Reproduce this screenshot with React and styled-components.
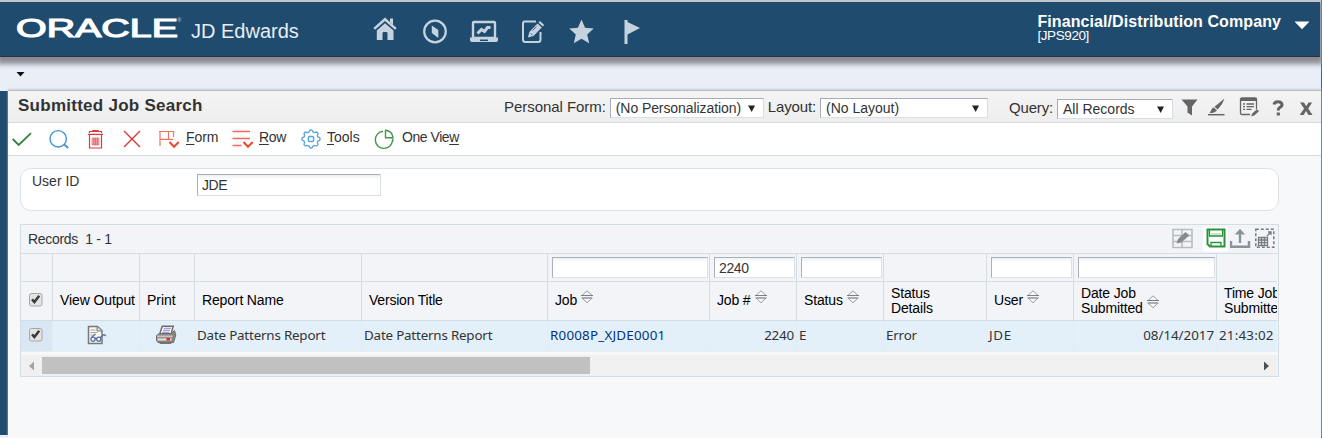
import React from 'react';
import styled, { createGlobalStyle } from 'styled-components';

const Global = createGlobalStyle`
  * { box-sizing: border-box; }
  html, body { margin: 0; padding: 0; overflow: hidden; }
  body { font-family: "Liberation Sans", Arial, sans-serif; font-size: 14px; color: #333; }
`;

const Page = styled.div`
  width: 1322px;
  height: 438px;
  display: flex;
  flex-direction: column;
  background: #e9eef7;
  border-right: 1px solid #1c6fb5;
`;
const TopBar = styled.header`
  flex: none;
  height: 57px;
  display: flex;
  align-items: flex-start;
  background: #1f4b6e;
  border-top: 2px solid #c3c5c7;
  border-bottom: 1px solid #33303a;
  box-shadow: 0 4px 5px 3px #8b8b93;
  margin-right: 1px;
  z-index: 1;
`;
const Logo = styled.svg`
  flex: none;
  display: block;
  width: 170px;
  height: 40px;
  margin-left: 16px;
  font-family: "Liberation Sans", Arial, sans-serif;
`;
const Product = styled.div`
  width: 181px;
  margin: 16px 0 0 5px;
  font-size: 20px;
  line-height: 26px;
  color: #e9eef2;
  white-space: nowrap;
`;
const NavIcons = styled.nav`
  display: flex;
  gap: 21px;
  margin-top: 15px;
`;
const NavIcon = styled.svg`
  width: 28px;
  height: 28px;
  display: block;
  color: #c6d3de;
`;
const Company = styled.div`
  margin: 11px 0 0 auto;
  color: #fff;
  white-space: nowrap;
`;
const CompanyName = styled.div`
  font-size: 16px;
  line-height: 17px;
  font-weight: bold;
  letter-spacing: 0.09px;
`;
const Env = styled.div`
  font-size: 13.5px;
  line-height: 12px;
  letter-spacing: -0.4px;
`;
const CompanyCaret = styled.svg`
  width: 16px;
  height: 9px;
  margin: 19px 10px 0 13px;
`;
const Crumbs = styled.div`
  flex: none;
  height: 33px;
  padding: 14px 0 0 16px;
  svg { display: block; }
`;
const Body = styled.div`
  flex: 1;
  display: flex;
  min-height: 0;
`;
const Strip = styled.aside`
  width: 8px;
  height: 344px;
  margin-top: 1px;
  background: #1f4b6e;
`;
const Main = styled.main`
  flex: 1;
  min-width: 0;
  background: #f7f8fa;
  border-top: 1px solid #bdc1c7;
  box-shadow: 0 -1px 2px #c9cdd5;
`;
const TitleBar = styled.div`
  height: 32px;
  display: flex;
  align-items: flex-start;
  background: linear-gradient(#f4f4f4, #eeeeee);
  border-bottom: 1px solid #d6dae0;
`;
const Title = styled.h1`
  margin: 5px auto 0 10px;
  font-size: 17px;
  line-height: 19px;
  letter-spacing: 0.26px;
  color: #333;
`;
const Label = styled.label`
  font-size: 15px;
  line-height: 18px;
  margin-top: ${p => p.$top || 7}px;
  margin-right: ${p => p.$gap}px;
  letter-spacing: ${p => p.$ls || 0}px;
  white-space: nowrap;
`;
const Select = styled.div`
  flex: none;
  width: ${p => p.$w}px;
  height: 20px;
  margin: ${p => p.$top}px ${p => p.$right}px 0 0;
  padding: 0 8px 0 5px;
  display: flex;
  align-items: center;
  justify-content: space-between;
  background: #fff;
  border: 1px solid #d9dfe6;
  border-top-color: #a6adb9;
  border-left-color: #a6adb9;
  font-size: 14px;
  letter-spacing: ${p => p.$ls || 0}px;
  white-space: nowrap;
  svg { flex: none; width: 7px; height: 7px; }
`;
const TitleIcons = styled.div`
  display: flex;
  align-items: flex-start;
  margin-top: 5px;
  svg { display: block; color: #636567; }
`;
const ToolBar = styled.div`
  height: 33px;
  display: flex;
  background: #fff;
  border-bottom: 1px solid #d9dde3;
`;
const Tool = styled.div`
  flex: none;
  width: ${p => p.$w}px;
  display: flex;
  svg { flex: none; display: block; width: 24px; height: 24px; margin-top: 4px; }
  span { margin: 6px 0 0 ${p => p.$gap || 5}px; font-size: 14px; line-height: 17px; letter-spacing: ${p => p.$ls || 0}px; white-space: nowrap; }
  u { text-underline-offset: 2px; text-decoration-skip-ink: none; }
`;
const Content = styled.section`
  padding: 12px 0 0 12px;
  width: 1271px;
`;
const FormBox = styled.div`
  height: 43px;
  display: flex;
  padding: 5px 0 0 11px;
  background: #fff;
  border: 1px solid #dce1e6;
  border-radius: 11px;
`;
const FieldLabel = styled.label`
  width: 165px;
  font-size: 14px;
  line-height: 14px;
`;
const Field = styled.div`
  flex: none;
  width: ${p => p.$w}px;
  height: ${p => p.$h || 22}px;
  padding: 0 4px;
  line-height: 20px;
  background: linear-gradient(#edf0f2, #fff 4px);
  border: 1px solid #dbe0e7;
  border-top-color: #aab0bb;
  border-left-color: #aab0bb;
  font-size: 14px;
  letter-spacing: -0.4px;
  white-space: nowrap;
`;
const Grid = styled.div`
  height: 153px;
  margin-top: 13px;
  border: 1px solid #d4dce4;
  background: #f2f4f8;
  overflow: hidden;
`;
const GridHead = styled.div`
  height: 29px;
  display: flex;
  justify-content: space-between;
  padding: 0 3px 0 7px;
  border-bottom: 1px solid #d4dce4;
  font-size: 14px;
  line-height: 28px;
  letter-spacing: -0.3px;
  white-space: pre;
`;
const GridTools = styled.div`
  display: flex;
  svg { display: block; }
`;
const Row = styled.div`
  display: flex;
  width: 1256px;
  height: ${p => p.$h}px;
  border-bottom: 1px solid ${p => (p.$selected ? '#e9ecf0' : '#d4dce4')};
  background: ${p => (p.$selected ? '#e3f0fa' : 'transparent')};
  overflow: hidden;
`;
const Cell = styled.div`
  flex: none;
  width: ${p => p.$w}px;
  height: 100%;
  border-right: 1px solid ${p => (p.$soft ? '#e3ebf3' : '#d4dce4')};
  background: ${p => (p.$shade ? '#d9e7f4' : 'none')};
  padding-left: ${p => p.$pl || 0}px;
  padding-right: ${p => p.$pr || 0}px;
  padding-top: ${p => p.$pt || 0}px;
  padding-bottom: ${p => p.$pb || 0}px;
  display: flex;
  align-items: ${p => (p.$top ? 'flex-start' : 'center')};
  justify-content: ${p => p.$justify || 'flex-start'};
  overflow: hidden;
  white-space: nowrap;
  svg { flex: none; }
`;
const HeadText = styled.div`
  font-size: 14px;
  line-height: 15px;
  letter-spacing: ${p => p.$ls ?? -0.15}px;
  color: #000;
  white-space: pre;
`;
const Data = styled.div`
  font-family: "Noto Sans", "Open Sans", sans-serif;
  font-size: 13.4px;
  line-height: 20px;
  letter-spacing: ${p => p.$ls ?? -0.2}px;
  color: ${p => (p.$link ? '#003286' : '#333')};
`;
const Scroll = styled.div`
  display: flex;
  width: 1256px;
  height: 21px;
  margin-top: 3px;
  align-items: flex-start;
  background: #f0f0f0;
  box-shadow: 0 -3px 0 #f7f8fa;
  svg { flex: none; width: 21px; height: 21px; }
`;
const Thumb = styled.div`
  width: 548px;
  height: 17px;
  margin: 2px auto 0 0;
  background: #c1c1c1;
`;

const Down = () => <svg viewBox="0 0 8 8"><path d="M0 .5h8L4.2 8z" fill="#222" /></svg>;

const Check = () => (
  <svg width="15" height="15" viewBox="0 0 15 15">
    <rect x="1.5" y="1.5" width="12.5" height="12.5" rx="2" fill="#e4e4e4" stroke="#a6a6a6" />
    <path d="M4 7.3 6.4 10l4.8-6.3" fill="none" stroke="#3a3a3a" strokeWidth="2.5" />
  </svg>
);

const Sort = () => (
  <svg width="12" height="14" viewBox="0 0 12 14">
    <path d="M1 5.5 6 .8l5 4.7z" fill="#f8f8fa" stroke="#979ba3" />
    <path d="M0 5.5h12" stroke="#777c85" />
    <path d="M1 8l5 4.8L11 8z" fill="#f8f8fa" stroke="#979ba3" />
    <path d="M.5 8h11" stroke="#8d929a" />
  </svg>
);
const SortSlot = styled.span`
  display: block;
  height: 14px;
  margin: ${p => p.$mt}px 0 0 4px;
  svg { display: block; }
`;

const columns = [
  { w: 32 },
  { w: 87, head: 'View Output', ls: -0.1 },
  { w: 55, head: 'Print', ls: -0.05 },
  { w: 167, head: 'Report Name', val: 'Date Patterns Report' },
  { w: 186, head: 'Version Title', val: 'Date Patterns Report', ls: -0.2 },
  { w: 162, head: 'Job', sort: true, filter: 156, val: 'R0008P_XJDE0001', link: true, vls: 0.2 },
  { w: 87, head: 'Job #', sort: true, filter: 81, filterVal: '2240', val: '2240', right: true },
  { w: 87, head: 'Status', sort: true, filter: 81, val: 'E' },
  { w: 103, head: 'Status\nDetails', val: 'Error' },
  { w: 87, head: 'User', sort: true, filter: 81, val: 'JDE', vls: 0.6 },
  { w: 143, head: 'Date Job\nSubmitted', sort: true, filter: 137, val: '08/14/2017', right: true, vls: -0.05 },
  { w: 80, head: 'Time Job\nSubmitted', val: '21:43:02', vls: 0.2 },
];

const Doc = () => (
  <svg width="20" height="20" viewBox="0 0 20 20" fill="none">
    <path d="M1.5 1.5h9l4.5 4v13H1.5z" fill="#f7f5ee" stroke="#77787a" strokeWidth="1.5" />
    <path d="M10 1.5v4.5h5" stroke="#77787a" fill="#d8d8d8" />
    <path d="M3.5 5h5M3.5 7.5h7M3.5 10h3" stroke="#a9a9a4" />
    <path d="M4.5 12.5l4-3.5M12.5 13l4.5-3.5 2 1.5" stroke="#5470a8" strokeWidth="1.3" />
    <circle cx="6" cy="14.3" r="2.1" stroke="#5470a8" strokeWidth="1.3" fill="#eef3ff" />
    <circle cx="11.8" cy="14.3" r="2.1" stroke="#5470a8" strokeWidth="1.3" fill="#eef3ff" />
    <path d="M8 13.5h1.6" stroke="#5470a8" strokeWidth="1.3" />
  </svg>
);
const Printer = () => (
  <svg width="22" height="20" viewBox="0 0 22 20">
    <path d="M7.2 1.2h11L16 9.5H4.5z" fill="#fbfaf4" stroke="#706c6c" strokeWidth="1.5" />
    <path d="M8.8 3.4h7M8 5.4h7M7.2 7.4h7" stroke="#a29be0" strokeWidth="1.2" />
    <path d="M1.5 10.5 4.5 8.5h12l3-3 1.3 4.5-2.3 7.5H3l-1.5-2z" fill="#8b8686" stroke="#706c6c" />
    <path d="M2 10.5h15.5v1.8H2z" fill="#c9c5c1" />
    <path d="M2.5 13.5h14v2h-14z" fill="#e8e4df" />
    <path d="M11.5 12.8h3.5v2.7h-3.5z" fill="#e02a28" />
    <path d="M4 17.5h13l-1 1.5H5z" fill="#797474" />
  </svg>
);

const gear = Array.from({ length: 64 }, (_, i) => {
  const a = (i / 64) * Math.PI * 2;
  const r = 8.1 + Math.max(-0.9, Math.min(0.9, Math.cos(a * 8) * 1.8));
  return `${(12 + r * Math.cos(a)).toFixed(2)},${(12 + r * Math.sin(a)).toFixed(2)}`;
}).join(' ');

export default function App() {
  return (
    <Page>
      <Global />
      <TopBar>
        <Logo viewBox="0 0 170 40">
          <text x="0" y="35.3" fontSize="26.5" fill="#fff" stroke="#fff" strokeWidth="1.2" textLength="162" lengthAdjust="spacingAndGlyphs">ORACLE</text>
          <text x="161.5" y="20" fontSize="5" fill="#d4dee6">®</text>
        </Logo>
        <Product>JD Edwards</Product>
        <NavIcons>
          <NavIcon viewBox="0 0 28 28" fill="currentColor">
            <path d="M18 1.5h3v6.5l-3-3z" />
            <path d="M13 .5 1.3 11l1.7 1.8L13 4l10 8.8 1.7-1.8z" />
            <path d="M13 6.3 4.8 13.5V23h5.7v-6.5c0-1 .5-1.5 1.5-1.5h2c1 0 1.5.5 1.5 1.5V23h6v-9.5z" />
          </NavIcon>
          <NavIcon viewBox="0 0 28 28" fill="none" stroke="currentColor" strokeWidth="2.2">
            <circle cx="14" cy="14.5" r="10.8" />
            <path d="M10.8 8.5l6.5 4.5v8l-6.5-5z" fill="currentColor" stroke="none" />
          </NavIcon>
          <NavIcon viewBox="0 0 28 28" fill="none" stroke="currentColor" strokeWidth="2">
            <rect x="3" y="5" width="22" height="16" rx="1" strokeWidth="2.4" />
            <path d="M7.5 16.5l4-4 3 2 3-4h3" strokeWidth="3" />
            <path d="M0 20.5h28V23q0 2-2 2H2q-2 0-2-2z" fill="currentColor" stroke="none" />
            <path d="M10 23.3h8" stroke="#1f4b6e" strokeWidth="1.5" />
          </NavIcon>
          <NavIcon viewBox="0 0 28 28" fill="none" stroke="currentColor" strokeWidth="2">
            <path d="M17 4.5H6q-2 0-2 2v16q0 2.5 2.5 2.5H19q2.5 0 2.5-2.5V15" />
            <path d="M9 20.5l1.3-5.5L18.5 6.5l4.3 4L14.5 19z" fill="currentColor" stroke="none" />
            <path d="M19.5 5.4l1.5-1.5 4.2 4-1.5 1.6z" fill="currentColor" stroke="none" />
            <path d="M11.5 16.5l2 1.5M13.5 13.5l4-4" stroke="#1f4b6e" strokeWidth=".8" />
          </NavIcon>
          <NavIcon viewBox="0 0 28 28" fill="currentColor">
            <path d="M13.5 2.5l3.6 8.3 8.6.8-6.5 6 2 8.7-7.7-4.5-7.7 4.5 2-8.7-6.5-6 8.6-.8z" />
          </NavIcon>
          <NavIcon viewBox="0 0 28 28" fill="currentColor">
            <path d="M7.500 3h3v24h-3zM10.500 5l12.500 6-12.500 6.500z" />
          </NavIcon>
        </NavIcons>
        <Company>
          <CompanyName>Financial/Distribution Company</CompanyName>
          <Env>[JPS920]</Env>
        </Company>
        <CompanyCaret viewBox="0 0 16 9"><path d="M.5.5h15L8 8.3z" fill="#fff" /></CompanyCaret>
      </TopBar>
      <Crumbs>
        <svg width="9" height="6" viewBox="0 0 9 6"><path d="M.5 1h8l-4 4.5z" fill="#111" /></svg>
      </Crumbs>
      <Body>
        <Strip />
        <Main>
          <TitleBar>
            <Title>Submitted Job Search</Title>
            <Label $gap={4} $ls={-0.06}>Personal Form:</Label>
            <Select $w={154} $top={7} $right={4} $ls={-0.08}>(No Personalization)<Down /></Select>
            <Label $gap={4} $ls={-0.14}>Layout:</Label>
            <Select $w={168} $top={7} $right={21}>(No Layout)<Down /></Select>
            <Label $gap={4} $top={8} $ls={-0.17}>Query:</Label>
            <Select $w={116} $top={8} $right={8}>All Records<Down /></Select>
            <TitleIcons>
              <svg width="27" height="24" viewBox="0 0 27 24"><path d="M.5 3.5h16L11 10.5v9l-4.5-3v-6z" fill="currentColor" /></svg>
              <svg width="31" height="24" viewBox="0 0 31 24">
                <path d="M16.5 2.5 14 8 9.7 13.5l-3.2-2.8z" fill="currentColor" />
                <path d="M5.8 11.5q-2.3.8-2.6 2.8-.5 1.5-1.7 2.4 4.8 1 7.5-2.2z" fill="currentColor" />
                <path d="M0 18.7h16.5" stroke="currentColor" strokeWidth="1.5" />
              </svg>
              <svg width="33" height="24" viewBox="0 0 33 24" fill="none" stroke="currentColor">
                <path d="M11 18.5H3q-1.5 0-1.5-1.5V3.5Q1.5 2 3 2h13q1.5 0 1.5 1.5V13" strokeWidth="1.3" />
                <path d="M1.5 3.5h16" strokeWidth="3" />
                <path d="M4 8h2M7.5 8h7.5M4 10.7h2M7.5 10.7h7.5M4 13.4h2M7.5 13.4h5" strokeWidth="1.3" />
                <path d="M12.5 20l1-2.5 4.5-4 1.7 1.7-4.5 4z" fill="currentColor" strokeWidth=".5" />
              </svg>
              <svg width="27" height="24" viewBox="0 0 27 24" fill="none" stroke="currentColor" strokeWidth="3">
                <path d="M2 8.5Q2.5 5.7 6 5.7T10 8.5Q10 10.5 8 11.3 6.3 12 6.3 14.5" />
                <path d="M4.7 16.5h3.2v3H4.7z" fill="currentColor" stroke="none" />
              </svg>
              <svg width="22" height="24" viewBox="0 0 22 24"><path d="M1 6.5h4l2.2 3.7 2.3-3.7h3.7L9.2 12.4l4.3 6.6h-4L7 14.9 4.7 19H.7l4.4-6.6z" fill="currentColor" /></svg>
            </TitleIcons>
          </TitleBar>
          <ToolBar>
            <Tool $w={39}><svg viewBox="-3 0 24 24"><path d="M1.7 12l6 6L20 6.2" fill="none" stroke="#32853c" strokeWidth="1.8" /></svg></Tool>
            <Tool $w={36}><svg viewBox="0 0 24 24" fill="none" stroke="#3e92d3" strokeWidth="1.4"><circle cx="11.2" cy="11.8" r="8.2" /><path d="M17.2 17.5l4 3.5" strokeWidth="1.7" /></svg></Tool>
            <Tool $w={37}>
              <svg viewBox="0 0 24 24" fill="none" stroke="#d93b40" strokeWidth="1.2">
                <path d="M6.5 7.5v13.5h12V7.5M5 7.4h15M6.5 6V4.5h12V6M10 4.5V3.7h5v.8" /><path d="M9 11h7v7H9z" fill="#f0aaab" stroke="#e88285" strokeWidth=".8" /><path d="M10.8 11v7M12.6 11v7M14.4 11v7" strokeWidth=".6" />
              </svg>
            </Tool>
            <Tool $w={37}><svg viewBox="0 0 24 24"><path d="M4 4l16 16M20 4 4 20" stroke="#dc3035" strokeWidth="1.3" /></svg></Tool>
            <Tool $w={74} $ls={-0.1}>
              <svg viewBox="0 0 24 24" fill="none" stroke="#ee7564" strokeWidth="1.2"><path d="M2 4.5h15M3 4v15M11.5 4v8M3 12.3h13M16.5 4v6" /><path d="M12.5 15l4.5 4.7 4.7-4.7" stroke="#ea4934" strokeWidth="2" /></svg>
              <span><u>F</u>orm</span>
            </Tool>
            <Tool $w={68} $gap={4} $ls={-0.3}>
              <svg viewBox="0 0 24 24" fill="none" stroke="#ed6b5c" strokeWidth="1.3"><path d="M1.5 4.5h17.5M1.5 11.5h17.5M1.5 18.5h9" /><path d="M12.5 15l4.5 4.7 4.7-4.7" stroke="#ea4934" strokeWidth="2" /></svg>
              <span><u>R</u>ow</span>
            </Tool>
            <Tool $w={74} $gap={4}>
              <svg viewBox="0 0 24 24" fill="none" stroke="#58a3da" strokeWidth="1.3"><polygon points={gear} /><rect x="9.4" y="9.4" width="5.2" height="5.2" rx="1.3" strokeWidth="1.5" /></svg>
              <span><u>T</u>ools</span>
            </Tool>
            <Tool $w={110} $ls={-0.45}>
              <svg viewBox="0 0 24 24" fill="none" stroke="#3f9849" strokeWidth="1.4"><path d="M10 4.2A8.6 8.6 0 1 0 19.5 13.5" /><path d="M12.5 3.2v7.5H20Q19.5 4 12.5 3.2z" /><path d="M19.7 11.8v3" /></svg>
              <span>One Vie<u>w</u></span>
            </Tool>
          </ToolBar>
          <Content>
            <FormBox>
              <FieldLabel>User ID</FieldLabel>
              <Field $w={184}>JDE</Field>
            </FormBox>
            <Grid>
              <GridHead>
                <span>{'Records  1 - 1'}</span>
                <GridTools>
                  <svg width="31" height="28" viewBox="-.5 0 31 28" fill="none">
                    <path d="M.5 4.5h19v18H.5zM.5 10.5h19M.5 16.5h19M9.5 4.5v18" stroke="#b9bdc2" strokeWidth="1.6" />
                    <path d="M4 18.5l1.5-4.5 7.5-7 3.8 3.5-8 7z" fill="#878b90" />
                  </svg>
                  <svg width="27" height="28" viewBox="0 0 27 28" fill="none" stroke="#28933a">
                    <path d="M0 1.5h25v25H0z" fill="#fff" stroke="none" />
                    <path d="M4.5 4.5h17v17h-14.500l-2.500-2.500z" strokeWidth="2" />
                    <path d="M6.500 5v6h13V5M8 21.5v-4h10v4" strokeWidth="1.3" /><path d="M8 9h10" stroke="#94c99c" strokeWidth="1" />
                  </svg>
                  <svg width="25" height="28" viewBox="0 0 25 28" fill="none" stroke="#8b9399" strokeWidth="2.4">
                    <path d="M1 16v5.8h18V16" /><path d="M10 18V8.5" /><path d="M4.8 9.5 10 3.8l5.2 5.7z" fill="#8b9399" stroke="none" />
                  </svg>
                  <svg width="20" height="28" viewBox="0 0 20 28" fill="none" stroke="#777c82">
                    <rect x=".8" y="4.3" width="18" height="18" strokeWidth="1.5" strokeDasharray="3 2" />
                    <path d="M3.5 12.5h9v8h-9zM3.5 15h9M3.5 17.7h9M6.5 12.5v8M9.5 12.5v8" strokeWidth="1.3" />
                    <path d="M12 11l3.5-3.5M13 7h3v3" strokeWidth="1.3" />
                  </svg>
                </GridTools>
              </GridHead>
              <Row $h={28}>
                {columns.map((c, i) => (
                  <Cell key={i} $w={c.w} $pl={4} $pt={3} $top>
                    {c.filter && <Field $w={c.filter} $h={21}>{c.filterVal}</Field>}
                  </Cell>
                ))}
              </Row>
              <Row $h={39}>
                {columns.map((c, i) => (
                  <Cell key={i} $w={c.w} $pl={7} $pb={i === 0 ? 3 : c.head.includes('\n') ? 0 : 2}>
                    {i === 0 ? <Check /> : <HeadText $ls={c.ls}>{c.head}</HeadText>}
                    {c.sort && <SortSlot $mt={c.head.includes('\n') ? 1 : -7}><Sort /></SortSlot>}
                  </Cell>
                ))}
              </Row>
              <Row $h={31} $selected>
                {columns.map((c, i) => (
                  <Cell key={i} $w={c.w} $soft $shade={i === 0} $pl={i === 0 ? 7 : i === 2 ? 0 : 2} $pr={i === 1 ? 0 : 2} $pb={i === 0 ? 4 : 3} $justify={i === 1 || i === 2 ? 'center' : c.right ? 'flex-end' : 'flex-start'}>
                    {i === 0 && <Check />}
                    {i === 1 && <Doc />}
                    {i === 2 && <Printer />}
                    {c.val && <Data $link={c.link} $ls={c.vls}>{c.val}</Data>}
                  </Cell>
                ))}
              </Row>
              <Scroll>
                <svg viewBox="0 0 21 21"><path d="M13 6.5v9l-5-4.5z" fill="#a3a3a3" /></svg>
                <Thumb />
                <svg viewBox="0 0 21 21"><path d="M8 6.5v9l5-4.5z" fill="#505050" /></svg>
              </Scroll>
            </Grid>
          </Content>
        </Main>
      </Body>
    </Page>
  );
}
